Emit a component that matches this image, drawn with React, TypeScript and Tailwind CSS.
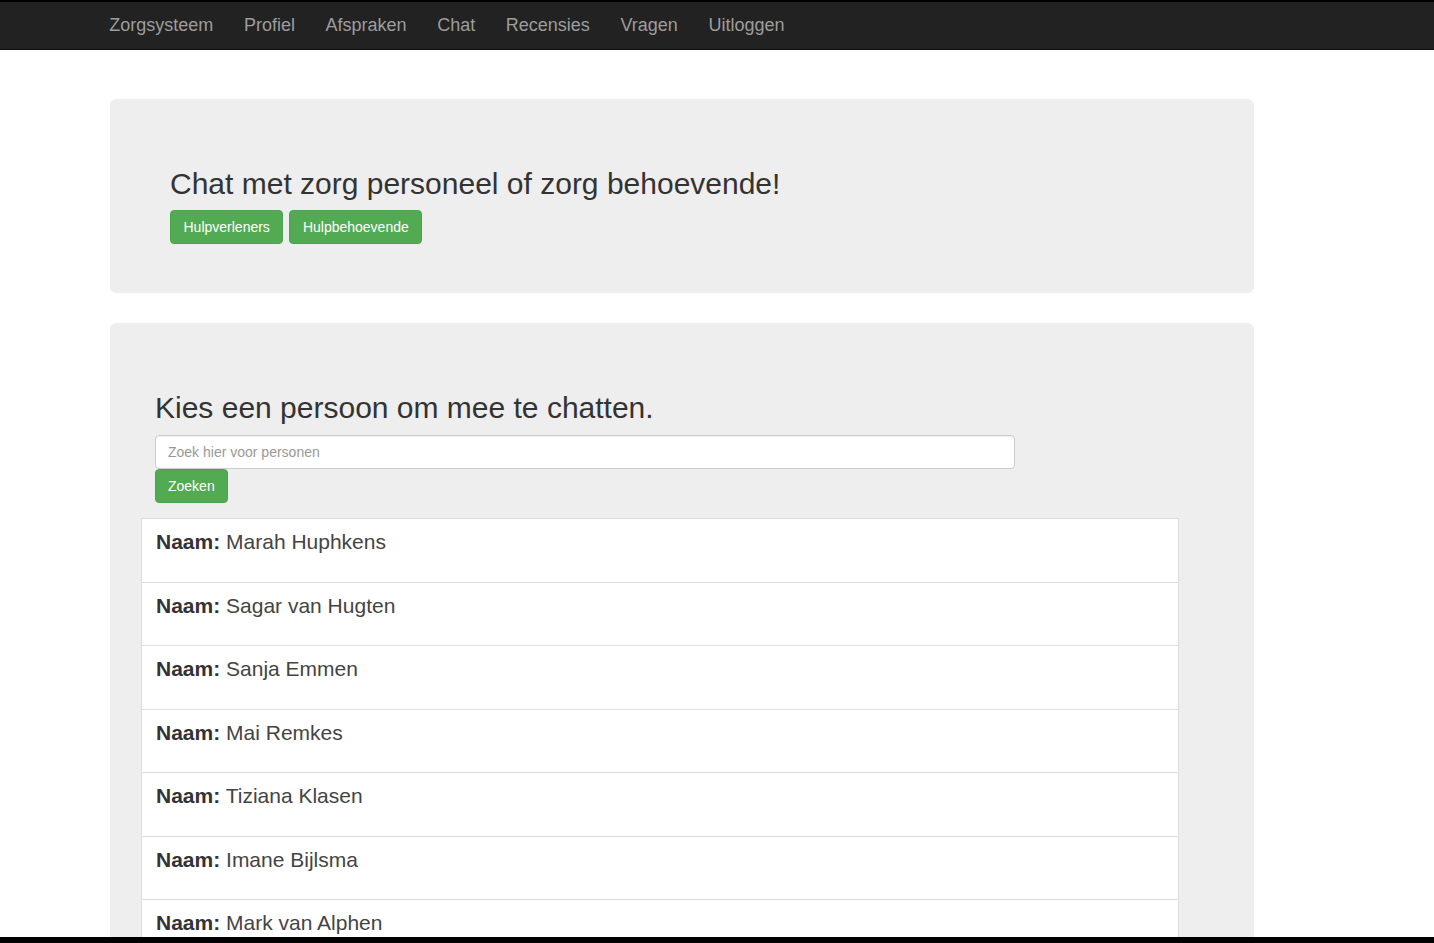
import React from "react";

const navItems = ["Zorgsysteem", "Profiel", "Afspraken", "Chat", "Recensies", "Vragen", "Uitloggen"];
const people = [
  "Marah Huphkens",
  "Sagar van Hugten",
  "Sanja Emmen",
  "Mai Remkes",
  "Tiziana Klasen",
  "Imane Bijlsma",
  "Mark van Alphen",
];

export default function App() {
  return (
    <div
      className="h-[943px] w-full flex flex-col overflow-hidden bg-white"
      style={{ fontFamily: '"Liberation Sans", Arial, sans-serif' }}
    >
      <div className="h-[2px] bg-black shrink-0" />
      <nav className="h-[48px] shrink-0 bg-[#222] flex items-center pl-[94px] border-b border-[#111]">
        {navItems.map((n) => (
          <a key={n} className="px-[15.3px] text-[18px] text-[#9d9d9d] leading-[20px] pb-[2px]">
            {n}
          </a>
        ))}
      </nav>
      <main className="flex-1 overflow-hidden pl-[110px] pt-[49px]">
        <section className="w-[1144px] h-[194px] bg-[#eee] rounded-[6px] px-[60px] pt-[68px]">
          <h2 className="text-[30px] leading-[33px] text-[#333]">Chat met zorg personeel of zorg behoevende!</h2>
          <div className="mt-[10px] flex gap-[6px]">
            <button className="h-[34px] px-[12.5px] text-[14px] text-white bg-[#52ab52] border border-[#4ca54c] rounded-[4px]">
              Hulpverleners
            </button>
            <button className="h-[34px] px-[12.5px] text-[14px] text-white bg-[#52ab52] border border-[#4ca54c] rounded-[4px]">
              Hulpbehoevende
            </button>
          </div>
        </section>
        <section className="mt-[30px] w-[1144px] bg-[#eee] rounded-t-[6px] pt-[68px] pb-[40px]">
          <div className="px-[45px]">
            <h2 className="text-[30px] leading-[33px] text-[#333]">Kies een persoon om mee te chatten.</h2>
            <input
              className="mt-[11px] block w-[860px] h-[34px] px-[12px] text-[14px] bg-white border border-[#ccc] rounded-[4px] shadow-[inset_0_1px_1px_rgba(0,0,0,0.075)] placeholder:text-[#999] outline-none"
              placeholder="Zoek hier voor personen"
            />
            <button className="block h-[34px] px-[12px] text-[14px] text-white bg-[#52ab52] border border-[#4ca54c] rounded-[4px]">
              Zoeken
            </button>
          </div>
          <ul className="mt-[15px] ml-[31px] w-[1038px]">
            {people.map((p) => (
              <li
                key={p}
                className="h-[64.5px] -mb-px bg-white border border-[#ddd] px-[14px] pt-[11px] text-[21px] leading-[24px] text-[#444]"
              >
                <b className="text-[#333]">Naam:</b> {p}
              </li>
            ))}
          </ul>
        </section>
      </main>
      <div className="h-[6px] bg-black shrink-0" />
    </div>
  );
}
